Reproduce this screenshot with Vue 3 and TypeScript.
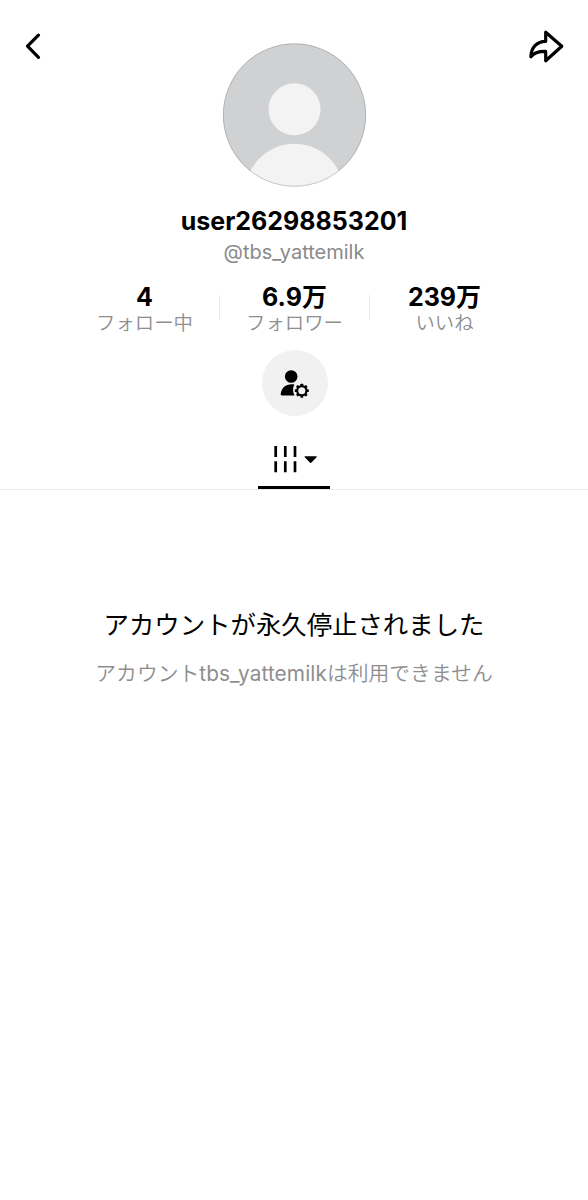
<script setup lang="ts">
interface Stat {
  num: string
  unit: string
  label: string
}

const stats: Stat[] = [
  { num: '4', unit: '', label: 'フォロー中' },
  { num: '6.9', unit: '万', label: 'フォロワー' },
  { num: '239', unit: '万', label: 'いいね' },
]
const teeth: number[] = [0, 45, 90, 135, 180, 225, 270, 315]
</script>

<template>
  <main class="screen">
    <header class="top">
      <svg class="back" width="20" height="30" viewBox="0 0 20 30">
        <path d="M15.5 4.2 4.5 15.2 15.5 26.4" />
      </svg>
      <svg class="avatar" width="146" height="146" viewBox="0 0 146 146">
        <defs>
          <clipPath id="face"><circle cx="72.5" cy="73" r="71.5" /></clipPath>
        </defs>
        <circle cx="72.5" cy="73" r="71.5" fill="#d0d1d3" />
        <g clip-path="url(#face)" fill="#f3f3f4">
          <circle cx="72.5" cy="67.3" r="26" />
          <circle cx="72.5" cy="151" r="49.3" />
        </g>
        <circle cx="72.5" cy="73" r="71.2" fill="none" stroke="#000" stroke-opacity=".17" />
      </svg>
      <svg class="share" width="38" height="36" viewBox="0 0 38 36">
        <path d="M18.7 4.2 34.8 18.3 18.7 32.8V23.4C11.5 23.2 7 24.7 3.9 28.7 4.1 19.7 9.7 13.5 18.7 13.3Z" />
      </svg>
    </header>

    <h1 class="name">user26298853201</h1>
    <p class="handle">@tbs_yattemilk</p>

    <section class="stats">
      <div v-for="s in stats" :key="s.label" class="stat">
        <strong class="value">{{ s.num }}<span v-if="s.unit">{{ s.unit }}</span></strong>
        <span class="label">{{ s.label }}</span>
      </div>
    </section>

    <button class="manage" type="button">
      <svg width="32" height="32" viewBox="1.2 0 32 32">
        <circle cx="13.4" cy="9.5" r="6.3" />
        <path d="M16.6 17.4C9.2 16.1 3.7 19.9 2.9 27 2.8 28 3.3 28.4 4.2 28.4H16.8C14.8 25 14.7 20.9 16.6 17.4Z" />
        <g transform="translate(24 23.7)">
          <rect v-for="t in teeth" :key="t" x="-1.4" y="-7" width="2.8" height="3.4" rx=".6" :transform="`rotate(${t})`" />
          <circle r="4.6" fill="#f1f1f2" stroke="#000" stroke-width="2.1" />
        </g>
      </svg>
    </button>

    <nav class="tabs">
      <div class="tab">
        <svg width="46" height="28" viewBox="0 0 46 28">
          <path class="bars" d="M4.7 1v11M14.3 1v11M24 1v11M4.7 16.2v11M14.3 16.2v11M24 16.2v11" />
          <path d="M34.3 11.2H45C45.8 11.2 46 11.8 45.5 12.3L40.5 17.5C40 18.1 39.3 18.1 38.8 17.5L33.8 12.3C33.3 11.8 33.5 11.2 34.3 11.2Z" />
        </svg>
      </div>
    </nav>

    <section class="notice">
      <h2>アカウントが永久停止されました</h2>
      <p>アカウント<span class="account">tbs_yattemilk</span>は利用できません</p>
    </section>
  </main>
</template>

<style>
body {
  background: #fff;
}
</style>

<style scoped>
.screen {
  display: flex;
  flex-direction: column;
  align-items: center;
  width: 588px;
  height: 1200px;
  overflow: hidden;
  background: #fff;
  color: #000;
  font-family: Inter, "Noto Sans CJK JP", sans-serif;
}
h1, h2, p {
  margin: 0;
  white-space: nowrap;
}
svg {
  display: block;
}
.top {
  display: flex;
  justify-content: space-between;
  width: 100%;
  height: 203px;
  padding: 31px 23px 0 23px;
  box-sizing: border-box;
}
.back path, .share path {
  fill: none;
  stroke: #000;
  stroke-width: 3.2;
  stroke-linecap: round;
  stroke-linejoin: round;
}
.avatar {
  margin: 11px 0 0 20px;
}
.share {
  margin: -3px 0 0;
}
.name {
  height: 36px;
  font-size: 25px;
  font-weight: 700;
  line-height: 36px;
}
.handle {
  height: 26px;
  font-size: 20px;
  line-height: 27px;
  color: #8a8a8b;
}
.stats {
  display: flex;
  width: 450px;
  margin-top: 17px;
  padding-left: 1px;
}
.stat {
  display: flex;
  flex: 1;
  flex-direction: column;
  align-items: center;
  height: 54px;
  background: linear-gradient(#e9e9e9, #e9e9e9) no-repeat right 13px / 1px 25px;
}
.stat:last-child {
  background: none;
}
.value {
  height: 28px;
  font-size: 25px;
  line-height: 30px;
}
.label {
  height: 24px;
  font-size: 19.4px;
  font-weight: 350;
  line-height: 27px;
  color: #8e8e8f;
}
.manage {
  display: flex;
  align-items: center;
  justify-content: center;
  width: 66px;
  height: 66px;
  margin: 14px 0 0 1px;
  padding: 0;
  border: 0;
  border-radius: 50%;
  background: #f1f1f2;
}
.tabs {
  display: flex;
  justify-content: center;
  width: 100%;
  height: 74px;
  background: linear-gradient(#ebebeb, #ebebeb) no-repeat left 73px / 100% 1px;
}
.tab {
  display: flex;
  justify-content: center;
  width: 72px;
  height: 73px;
  padding-top: 29px;
  box-sizing: border-box;
  background: linear-gradient(#000, #000) no-repeat left bottom / 100% 3px;
}
.bars {
  stroke: #000;
  stroke-width: 2.7;
}
.notice {
  display: flex;
  flex-direction: column;
  align-items: center;
  padding-top: 116px;
}
.notice h2 {
  height: 38px;
  font-size: 25.4px;
  font-weight: 400;
  line-height: 38px;
}
.notice p {
  height: 30px;
  margin-top: 15px;
  font-size: 20.8px;
  font-weight: 350;
  line-height: 30px;
  color: #8e8e8f;
}
.account {
  font-weight: 400;
  letter-spacing: 0.1px;
}
</style>
